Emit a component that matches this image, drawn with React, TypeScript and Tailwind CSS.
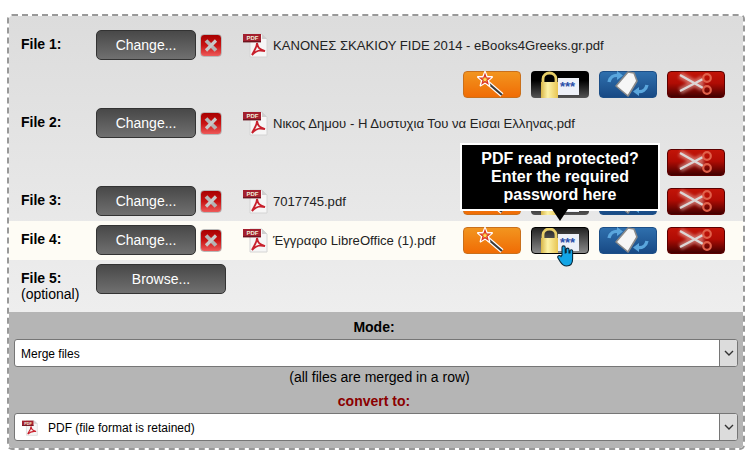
import React from "react";

function PdfIcon({ small = false }: { small?: boolean }) {
  const w = small ? 16 : 25;
  const h = small ? 16 : 25;
  return (
    <svg width={w} height={h} viewBox="0 0 25 25" className="shrink-0">
      <path d="M7 1h12l5 5v18H7z" fill="#f6f6f6" stroke="#d4d4d4" strokeWidth="1" />
      <path d="M19 1l5 5h-5z" fill="#cfcfcf" />
      <rect x="0" y="1" width="18" height="8" fill="#a3202e" />
      <rect x="0" y="8" width="18" height="1.400" fill="#6d1520" />
      <text x="3.500" y="7.400" fontSize="6" fontWeight="700" fill="#eed" fontFamily="Liberation Sans, sans-serif">PDF</text>
      <path d="M14 10c1 5 2 6 8 8-5-1-8-1-13 4 3-6 5-8 5-12z" fill="none" stroke="#c8202c" strokeWidth="1.800" />
    </svg>
  );
}

function DeleteIcon() {
  return (
    <div className="w-[22px] h-[23px] shrink-0 rounded-[4px] border border-[#b9b9b9] bg-[linear-gradient(#a80000_0%,#c81414_50%,#ee5a5a_100%)] flex items-center justify-center">
      <svg width="14" height="13" viewBox="0 0 14 13">
        <path d="M2 1.500l10 10" stroke="#b4b4b4" strokeWidth="3.800" />
        <path d="M12 1.500l-10 10" stroke="#c8c8c8" strokeWidth="3.200" />
      </svg>
    </div>
  );
}

function Btn({ label, wide = false }: { label: string; wide?: boolean }) {
  return (
    <div className={`${wide ? "w-[130px]" : "w-[100px]"} h-[30px] shrink-0 rounded-[5px] border border-[#333] bg-[linear-gradient(#484848,#707070)] text-white text-[14px] flex items-center justify-center`}>
      {label}
    </div>
  );
}

function Wand() {
  return (
    <svg width="30" height="27" viewBox="0 0 30 27">
      <path d="M11 12l14 12" stroke="#fff" strokeWidth="4.400" />
      <path d="M11 12l14 12" stroke="#3a3a3a" strokeWidth="2.200" />
      <path d="M8 1l1.800 4.800 5.200.2-4 3.400 1.400 5-4.400-2.800-4.400 2.800 1.400-5-4-3.400 5.200-.2z" fill="#ffe34d" stroke="#fff" strokeWidth="2" strokeLinejoin="round" />
      <path d="M8 3.500l1.200 3.400 3.400.1-2.700 2.200.9 3.300-2.800-1.900-2.800 1.900.9-3.300-2.700-2.200 3.400-.1z" fill="#ffe34d" stroke="#dc3a28" strokeWidth="1.300" />
    </svg>
  );
}

function Lock({ id, stars = true }: { id: string; stars?: boolean }) {
  return (
    <svg width="58" height="27" viewBox="0 0 58 27" className="shrink-0">
      <rect x="27" y="7" width="21" height="17" fill="#eef1f8" />
      {stars && (
        <text x="29" y="20" fontSize="13" fontWeight="700" fill="#2a4ea8" fontFamily="Liberation Sans, sans-serif">***</text>
      )}
      <path d="M12 13V8c0-8 13-8 13 0v5" fill="none" stroke="#e8cf68" strokeWidth="2.800" />
      <defs>
        <linearGradient id={id} x1="0" y1="0" x2="1" y2="0">
          <stop offset="0" stopColor="#d8b648" />
          <stop offset="0.4" stopColor="#fdf3a8" />
          <stop offset="1" stopColor="#e8c552" />
        </linearGradient>
      </defs>
      <rect x="10" y="11" width="17" height="16" fill={`url(#${id})`} />
    </svg>
  );
}

function Rotate() {
  return (
    <svg width="44" height="27" viewBox="0 0 44 27">
      <path d="M3 11c1-5 5-7 9-6.500" fill="none" stroke="#5aa6dd" strokeWidth="3.400" />
      <path d="M11 0l6 4.500-6 4.500z" fill="#5aa6dd" />
      <path d="M41 14c-1 5-5 7-9 6.500" fill="none" stroke="#5aa6dd" strokeWidth="3.400" />
      <path d="M33 25l-6-4.500 6-4.500z" fill="#5aa6dd" />
      <path d="M10 15L22 1l6 1 3 8-9 15z" fill="#f6f6f6" stroke="#8a8a8a" strokeWidth="1.600" strokeLinejoin="round" />
    </svg>
  );
}

function Scissors() {
  return (
    <svg width="42" height="27" viewBox="0 0 42 27" className="overflow-visible">
      <path d="M5 4l23 13M5 20l23-12" stroke="#f4d4cc" strokeWidth="7" opacity="0.45" className="blur-[1.5px]" />
      <path d="M5 4l23 13M5 20l23-12" stroke="#dcd6d6" strokeWidth="2.400" />
      <circle cx="32" cy="7" r="3.800" fill="none" stroke="#e0604a" strokeWidth="2.200" />
      <circle cx="32" cy="19" r="3.800" fill="none" stroke="#e0604a" strokeWidth="2.200" />
    </svg>
  );
}

function Actions({ hover = false, id, stars = true }: { hover?: boolean; id: string; stars?: boolean }) {
  return (
    <div className="flex gap-[10px] shrink-0">
      <div className="w-[58px] h-[27px] rounded-[4px] border border-[#c9701c] bg-[linear-gradient(#f2951f,#f06c05)] flex items-center justify-center">
        <Wand />
      </div>
      <div className={`w-[58px] h-[27px] rounded-[4px] overflow-hidden flex items-center justify-center ${hover ? "bg-[linear-gradient(#222,#8a8a8a)] border border-black" : "bg-[linear-gradient(#000_0%,#000_35%,#555_100%)]"}`}>
        <Lock id={id} stars={stars} />
      </div>
      <div className="w-[58px] h-[27px] rounded-[4px] border border-[#1d4f87] bg-[linear-gradient(#2f6fad,#184a85)] flex items-center justify-center">
        <Rotate />
      </div>
      <div className="w-[58px] h-[27px] rounded-[4px] border border-[#5c0000] bg-[linear-gradient(#c21408,#b00c04_45%,#420000)] flex items-center justify-center">
        <Scissors />
      </div>
    </div>
  );
}

function FileHead({ n, name }: { n: number; name: string }) {
  return (
    <>
      <div className="w-[75px] shrink-0 font-bold text-[14px] text-black -mt-[2px]">File {n}:</div>
      <Btn label="Change..." />
      <div className="ml-[4px]"><DeleteIcon /></div>
      <div className="ml-[21px] mr-[5px]"><PdfIcon /></div>
      <div className="text-[13.1px] text-[#222] whitespace-nowrap pt-[1px]">{name}</div>
    </>
  );
}

function SelectBox({ children }: { children: React.ReactNode }) {
  return (
    <div className="h-[28px] bg-white border border-[#767676] rounded-[3px] overflow-hidden flex items-center text-[12px] text-black">
      <div className="flex-1 flex items-center pt-[1px]">{children}</div>
      <div className="w-[18px] h-full border-l border-[#767676] bg-[#dcdcdc] flex items-center justify-center">
        <svg width="10" height="6" viewBox="0 0 10 6">
          <path d="M1 1l4 4 4-4" fill="none" stroke="#333" strokeWidth="1.400" />
        </svg>
      </div>
    </div>
  );
}

export default function App() {
  return (
    <div className="w-[750px] h-[461px] bg-white pt-[14px] pl-[7px] font-['Liberation_Sans',Arial,sans-serif]">
      <div className="relative w-[738px] h-[436px] rounded-[5px] border-2 border-dashed border-[#999] overflow-hidden flex flex-col">
        <div className="h-[296px] bg-[linear-gradient(#dcdcdc,#eeeeee)] flex flex-col">
          <div className="pl-[12px] pr-[18px] pt-[14px]">
            <div className="flex items-center h-[30px]">
              <FileHead n={1} name="ΚΑΝΟΝΕΣ ΣΚΑΚΙΟΥ FIDE 2014 - eBooks4Greeks.gr.pdf" />
            </div>
            <div className="flex justify-end mt-[11px]"><Actions id="l1" /></div>
          </div>
          <div className="pl-[12px] pr-[18px] pt-[10px]">
            <div className="flex items-center h-[30px]">
              <FileHead n={2} name="Νικος Δημου - Η Δυστυχια Του να Εισαι Ελληνας.pdf" />
            </div>
            <div className="flex justify-end mt-[11px]"><Actions id="l2" stars={false} /></div>
          </div>
          <div className="pl-[12px] pr-[18px] pt-[10px] pb-[5px]">
            <div className="flex items-center h-[30px]">
              <FileHead n={3} name="7017745.pdf" />
              <div className="ml-auto"><Actions id="l3" stars={false} /></div>
            </div>
          </div>
          <div className="pl-[12px] pr-[18px] pt-[4px] pb-[5px] bg-[#fefcf5]">
            <div className="flex items-center h-[30px]">
              <FileHead n={4} name="Έγγραφο LibreOffice (1).pdf" />
              <div className="ml-auto"><Actions id="l4" hover /></div>
            </div>
          </div>
          <div className="pl-[12px] pt-[4px] flex items-start">
            <div className="w-[75px] shrink-0 text-[14px] leading-[16px] text-black pt-[6px]">
              <div className="font-bold">File 5:</div>
              <div>(optional)</div>
            </div>
            <Btn label="Browse..." wide />
          </div>
        </div>
        <div className="flex-1 bg-[#b5b5b5] px-[5px] text-center text-[14px] leading-[16px] text-black">
          <div className="font-bold pt-[7px] pb-[4px] pr-[4px]">Mode:</div>
          <SelectBox><span className="pl-[6px]">Merge files</span></SelectBox>
          <div className="pt-[2px] pl-[7px]">(all files are merged in a row)</div>
          <div className="font-bold text-[#8b0000] pt-[8px] pb-[4px] pr-[4px]">convert to:</div>
          <SelectBox>
            <span className="pl-[7px] pr-[10px]"><PdfIcon small /></span>
            <span>PDF (file format is retained)</span>
          </SelectBox>
        </div>

        <div className="absolute left-[451px] top-[127px] w-[200px] h-[68px] bg-black border-2 border-white text-white text-[16px] leading-[18px] font-bold text-center pt-[5px]">
          PDF read protected?
          <br />
          Enter the required
          <br />
          password here
          <div className="absolute left-[90px] top-[64px] w-0 h-0 border-x-[8px] border-x-transparent border-t-[12px] border-t-black" />
        </div>

        <svg width="19" height="22" viewBox="0 0 19 22" className="absolute left-[548px] top-[229px]">
          <path d="M5 10V2.500a1.600 1.600 0 0 1 3.200 0V8l1-.3V4.500a1.400 1.400 0 0 1 2.800 0V8l1-.1V6a1.300 1.300 0 0 1 2.600 0v8c0 4-2 7-6 7-3.500 0-5-2-6.500-4.500L1 13c-1-2 1.500-3.500 3-1.500z" fill="#12a5e6" stroke="#08283a" strokeWidth="1.100" />
        </svg>
      </div>
    </div>
  );
}
